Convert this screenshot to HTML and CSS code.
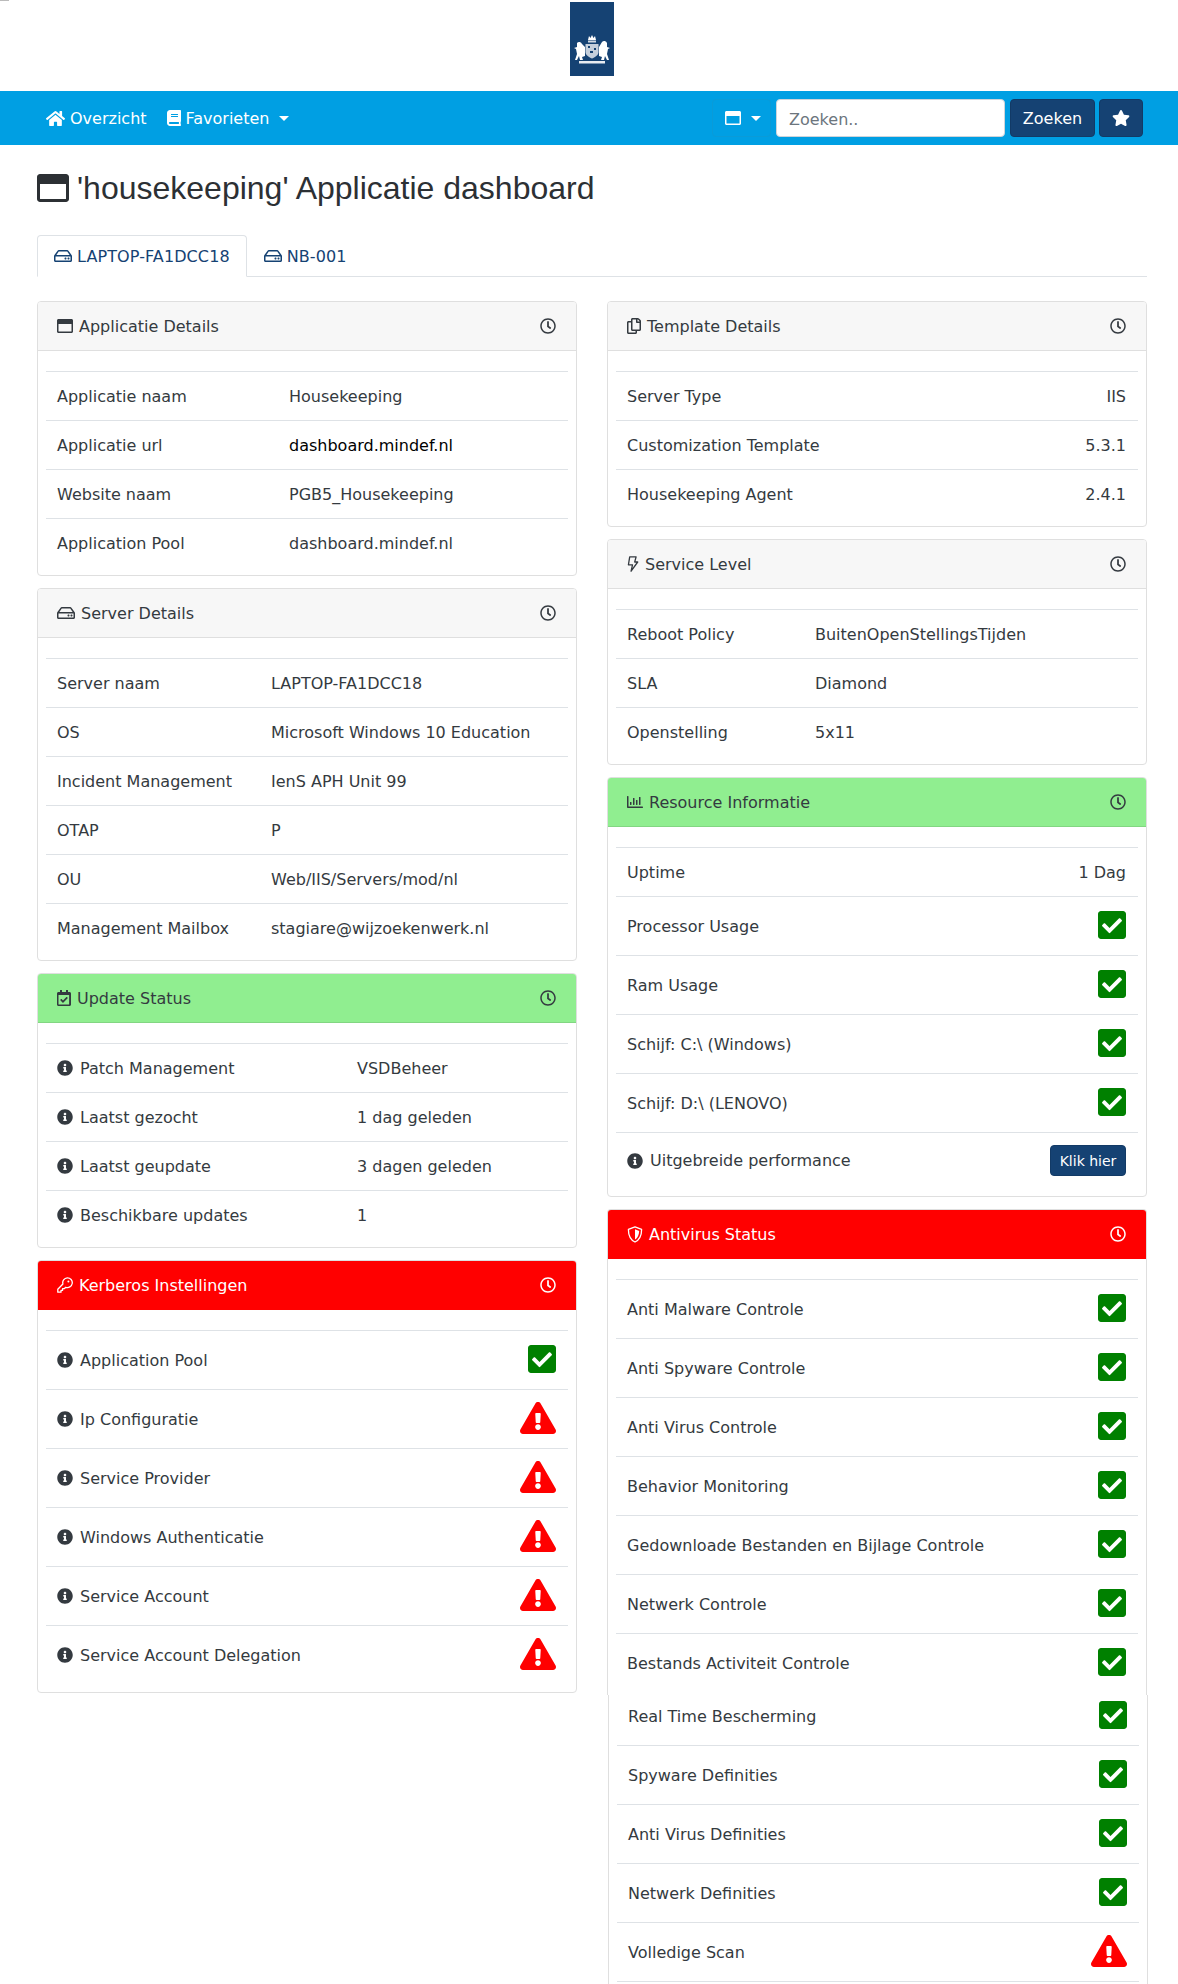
FILE: index.html
```html
<!DOCTYPE html>
<html lang="en">

<head>
  <meta charset="UTF-8">
  <meta name="viewport" content="width=device-width, initial-scale=1.0">
  <title>Housekeeping dashboard</title>
  <link rel="stylesheet" href="styles.css">
</head>

<body>
  <!-- icon set -->
  <svg class="sprite" xmlns="http://www.w3.org/2000/svg">
    <symbol id="i-check" viewBox="0 0 448 512"><path d="M400 480H48c-26.51 0-48-21.49-48-48V80c0-26.51 21.49-48 48-48h352c26.51 0 48 21.49 48 48v352c0 26.51-21.49 48-48 48zm-204.686-98.059l184-184c6.248-6.248 6.248-16.379 0-22.627l-22.627-22.627c-6.248-6.248-16.379-6.249-22.628 0L184 302.745l-70.059-70.059c-6.248-6.248-16.379-6.248-22.628 0l-22.627 22.627c-6.248 6.248-6.248 16.379 0 22.627l104 104c6.249 6.25 16.379 6.25 22.628.001z"/></symbol>
    <symbol id="i-warn" viewBox="0 0 576 512"><path d="M569.517 440.013C587.975 472.007 564.806 512 527.94 512H48.054c-36.937 0-59.999-40.055-41.577-71.987L246.423 23.985c18.467-32.009 64.72-31.951 83.154 0l239.94 416.028zM288 354c-25.405 0-46 20.595-46 46s20.595 46 46 46 46-20.595 46-46-20.595-46-46-46zm-43.673-165.346l7.418 136c.347 6.364 5.609 11.346 11.982 11.346h48.546c6.373 0 11.635-4.982 11.982-11.346l7.418-136c.375-6.874-5.098-12.654-11.982-12.654h-63.383c-6.884 0-12.356 5.78-11.981 12.654z"/></symbol>
    <symbol id="i-info" viewBox="0 0 512 512"><path d="M256 8C119.043 8 8 119.083 8 256c0 136.997 111.043 248 248 248s248-111.003 248-248C504 119.083 392.957 8 256 8zm0 110c23.196 0 42 18.804 42 42s-18.804 42-42 42-42-18.804-42-42 18.804-42 42-42zm56 254c0 6.627-5.373 12-12 12h-88c-6.627 0-12-5.373-12-12v-24c0-6.627 5.373-12 12-12h12v-64h-12c-6.627 0-12-5.373-12-12v-24c0-6.627 5.373-12 12-12h64c6.627 0 12 5.373 12 12v100h12c6.627 0 12 5.373 12 12v24z"/></symbol>
    <symbol id="i-star" viewBox="0 0 576 512"><path d="M259.3 17.8L194 150.2 47.9 171.5c-26.2 3.8-36.7 36.1-17.7 54.6l105.7 103-25 145.5c-4.5 26.3 23.2 46 46.4 33.7L288 439.6l130.7 68.7c23.2 12.2 50.9-7.4 46.4-33.7l-25-145.5 105.7-103c19-18.5 8.5-50.8-17.7-54.6L382 150.2 316.7 17.8c-11.7-23.6-45.6-23.9-57.4 0z"/></symbol>
    <symbol id="i-home" viewBox="0 0 576 512"><path d="M280.37 148.26L96 300.11V464a16 16 0 0 0 16 16l112.06-.29a16 16 0 0 0 15.92-16V368a16 16 0 0 1 16-16h64a16 16 0 0 1 16 16v95.64a16 16 0 0 0 16 16.05L464 480a16 16 0 0 0 16-16V300L295.67 148.26a12.19 12.19 0 0 0-15.3 0zM571.6 251.47L488 182.56V44.05a12 12 0 0 0-12-12h-56a12 12 0 0 0-12 12v72.61L318.47 43a48 48 0 0 0-61 0L4.34 251.47a12 12 0 0 0-1.6 16.9l25.5 31A12 12 0 0 0 45.15 301l235.22-193.74a12.19 12.19 0 0 1 15.3 0L530.9 301a12 12 0 0 0 16.9-1.6l25.5-31a12 12 0 0 0-1.7-16.93z"/></symbol>
    <symbol id="i-book" viewBox="0 0 448 512"><path d="M448 360V24c0-13.3-10.7-24-24-24H96C43 0 0 43 0 96v320c0 53 43 96 96 96h328c13.3 0 24-10.7 24-24v-16c0-7.5-3.5-14.3-8.9-18.7-4.2-15.4-4.2-59.3 0-74.7 5.4-4.3 8.9-11.1 8.9-18.6zM128 134c0-3.3 2.7-6 6-6h212c3.3 0 6 2.7 6 6v20c0 3.3-2.7 6-6 6H134c-3.3 0-6-2.7-6-6v-20zm0 64c0-3.3 2.7-6 6-6h212c3.3 0 6 2.7 6 6v20c0 3.3-2.7 6-6 6H134c-3.3 0-6-2.7-6-6v-20zm253.4 250H96c-17.7 0-32-14.3-32-32 0-17.6 14.4-32 32-32h285.4c-1.9 17.1-1.9 46.9 0 64z"/></symbol>
    <symbol id="i-window" viewBox="0 0 512 512"><path d="M464 32H48C21.5 32 0 53.5 0 80v352c0 26.5 21.5 48 48 48h416c26.5 0 48-21.5 48-48V80c0-26.5-21.5-48-48-48zm0 394c0 3.3-2.7 6-6 6H54c-3.3 0-6-2.7-6-6V192h416v234z"/></symbol>
    <symbol id="i-clock" viewBox="0 0 512 512"><path d="M256 8C119 8 8 119 8 256s111 248 248 248 248-111 248-248S393 8 256 8zm0 448c-110.5 0-200-89.5-200-200S145.5 56 256 56s200 89.5 200 200-89.5 200-200 200zm61.8-104.4l-84.9-61.7c-3.1-2.3-4.9-5.9-4.9-9.7V116c0-6.6 5.4-12 12-12h32c6.6 0 12 5.4 12 12v141.7l66.8 48.6c5.4 3.9 6.5 11.4 2.6 16.8L334.6 349c-3.9 5.3-11.4 6.5-16.8 2.6z"/></symbol>
    <symbol id="i-hdd" viewBox="0 0 576 512"><path d="M567.403 235.642L462.323 84.589A48 48 0 0 0 422.919 64H153.081a48 48 0 0 0-39.404 20.589L8.597 235.642A48.001 48.001 0 0 0 0 263.054V400c0 26.51 21.49 48 48 48h480c26.51 0 48-21.49 48-48V263.054c0-9.801-3-19.366-8.597-27.412zM153.081 112h269.838l77.913 112H75.168l77.913-112zM528 400H48V272h480v128zm-32-64c0 17.673-14.327 32-32 32s-32-14.327-32-32 14.327-32 32-32 32 14.327 32 32zm-96 0c0 17.673-14.327 32-32 32s-32-14.327-32-32 14.327-32 32-32 32 14.327 32 32z"/></symbol>
    <symbol id="i-copy" viewBox="0 0 448 512"><path d="M433.941 65.941l-51.882-51.882A48 48 0 0 0 348.118 0H176c-26.51 0-48 21.49-48 48v48H48c-26.51 0-48 21.49-48 48v320c0 26.51 21.49 48 48 48h224c26.51 0 48-21.49 48-48v-48h80c26.51 0 48-21.49 48-48V99.882a48 48 0 0 0-14.059-33.941zM266 464H54a6 6 0 0 1-6-6V150a6 6 0 0 1 6-6h74v224c0 26.51 21.49 48 48 48h96v42a6 6 0 0 1-6 6zm128-96H182a6 6 0 0 1-6-6V54a6 6 0 0 1 6-6h106v88c0 13.255 10.745 24 24 24h88v202a6 6 0 0 1-6 6zm6-256h-64V48h9.632c1.591 0 3.117.632 4.243 1.757l48.368 48.368a6 6 0 0 1 1.757 4.243V112z"/></symbol>
    <symbol id="i-calendar" viewBox="0 0 448 512"><path d="M400 64h-48V12c0-6.627-5.373-12-12-12h-40c-6.627 0-12 5.373-12 12v52H160V12c0-6.627-5.373-12-12-12h-40c-6.627 0-12 5.373-12 12v52H48C21.49 64 0 85.49 0 112v352c0 26.51 21.49 48 48 48h352c26.51 0 48-21.49 48-48V112c0-26.51-21.49-48-48-48zm-6 400H54a6 6 0 0 1-6-6V160h340v298a6 6 0 0 1-6 6zm-52.849-200.65L198.842 404.519c-4.705 4.667-12.303 4.637-16.971-.068l-75.091-75.699c-4.667-4.705-4.637-12.303.068-16.971l22.719-22.536c4.705-4.667 12.303-4.637 16.97.069l44.104 44.461 111.072-110.181c4.705-4.667 12.303-4.637 16.971.068l22.536 22.718c4.667 4.705 4.636 12.303-.069 16.97z"/></symbol>
    <symbol id="i-chart" viewBox="0 0 512 512"><path d="M396.8 352h22.4c6.4 0 12.8-6.4 12.8-12.8V108.8c0-6.4-6.4-12.8-12.8-12.8h-22.4c-6.4 0-12.8 6.4-12.8 12.8v230.4c0 6.4 6.4 12.8 12.8 12.8zm-192 0h22.4c6.4 0 12.8-6.4 12.8-12.8V140.8c0-6.4-6.4-12.8-12.8-12.8h-22.4c-6.4 0-12.8 6.4-12.8 12.8v198.4c0 6.4 6.4 12.8 12.8 12.8zm96 0h22.4c6.4 0 12.8-6.4 12.8-12.8V204.8c0-6.4-6.4-12.8-12.8-12.8h-22.4c-6.4 0-12.8 6.4-12.8 12.8v134.4c0 6.4 6.4 12.8 12.8 12.8zM496 400H48V80c0-8.84-7.16-16-16-16H16C7.16 64 0 71.16 0 80v336c0 17.67 14.33 32 32 32h464c8.84 0 16-7.16 16-16v-16c0-8.84-7.16-16-16-16zm-387.2-48h22.4c6.4 0 12.8-6.4 12.8-12.8v-70.4c0-6.4-6.4-12.8-12.8-12.8h-22.4c-6.4 0-12.8 6.4-12.8 12.8v70.4c0 6.4 6.4 12.8 12.8 12.8z"/></symbol>
    <symbol id="i-bolt" viewBox="0 0 11 16"><path d="M2.2 .8h6.4L7.2 6h3L3.6 15.2 5 8.8H.9z" fill="none" stroke="currentColor" stroke-width="1.3" stroke-linejoin="round"/></symbol>
    <symbol id="i-key" viewBox="0 0 16 16"><path d="M10.3 .8a4.9 4.9 0 1 1-1.6 9.5L7.3 11.7H5.6v1.6H4v1.9H.8v-3l5.1-5.2A4.9 4.9 0 0 1 10.3 .8z" fill="none" stroke="currentColor" stroke-width="1.3" stroke-linejoin="round"/><circle cx="11.4" cy="4.6" r="1"/></symbol>
    <symbol id="i-shield" viewBox="0 0 16 17"><path d="M8 .8l6.6 2.6C14.6 9.6 12 14 8 16 4 14 1.400 9.600 1.400 3.400z" fill="none" stroke="currentColor" stroke-width="1.300" stroke-linejoin="round"/><path d="M8 3.200l4.200 1.700C12 9 10.500 12 8 13.500z"/></symbol>
  </svg>

  <div class="page">
    <header class="top">
      <div class="top-mark"></div>
      <div class="logo">
        <svg width="44" height="74" viewBox="0 0 44 74">
          <rect width="44" height="74" fill="#154273" />
          <g fill="#fff">
            <path d="M18 38l1-4 1.500 2 1.500-3 1.500 3 1.500-2 1 4z" />
            <rect x="18" y="38.500" width="8" height="2" opacity=".8" />
            <path d="M15.500 42h13v8c0 3-3 5-6.500 6.500-3.500-1.500-6.500-3.500-6.500-6.500z" opacity=".75" />
            <path d="M7 41a3 3 0 0 1 5 1l3 3v9l-3 1 1 3h-3l-1-4-2 4H5l2-6-1-5-2-1 3-1z" />
            <path d="M37 41a3 3 0 0 0-5-1l-3 5v9l3 1-1 3h3l1-4 2 4h2l-2-6 1-5 2-1-3-1z" />
            <path d="M9 59h26v2.500H9z" opacity=".9" />
          </g>
          <g fill="#154273">
            <rect x="18" y="44" width="2" height="2" />
            <rect x="24" y="46" width="2" height="2" />
            <rect x="20" y="49" width="3" height="2" />
          </g>
        </svg>
      </div>
    </header>

    <nav class="navbar">
      <a class="nav-item"><svg class="ic ic-home"><use href="#i-home" /></svg>Overzicht</a>
      <a class="nav-item nav-fav"><svg class="ic ic-book"><use href="#i-book" /></svg>Favorieten<span class="caret caret-fav"></span></a>
      <div class="nav-right">
        <button class="btn-view"><svg class="ic ic-view"><use href="#i-window" /></svg><span class="caret"></span></button>
        <input class="search" type="text" placeholder="Zoeken..">
        <button class="btn-navy btn-search">Zoeken</button>
        <button class="btn-navy btn-star"><svg class="ic ic-star"><use href="#i-star" /></svg></button>
      </div>
    </nav>

    <main class="main">
      <h1 class="title"><svg class="ic ic-title"><use href="#i-window" /></svg>'housekeeping' Applicatie dashboard</h1>

      <ul class="tabs">
        <li class="tab active"><svg class="ic ic-hdd"><use href="#i-hdd" /></svg>LAPTOP-FA1DCC18</li>
        <li class="tab"><svg class="ic ic-hdd"><use href="#i-hdd" /></svg>NB-001</li>
      </ul>

      <div class="columns">
        <div class="column">

          <section class="card app">
            <div class="card-head"><span class="head-title"><svg class="ic ic-16"><use href="#i-window" /></svg>Applicatie Details</span><svg class="ic ic-16"><use href="#i-clock" /></svg></div>
            <div class="card-body">
              <div class="row"><span class="label">Applicatie naam</span><span>Housekeeping</span></div>
              <div class="row"><span class="label">Applicatie url</span><a class="link">dashboard.mindef.nl</a></div>
              <div class="row"><span class="label">Website naam</span><span>PGB5_Housekeeping</span></div>
              <div class="row"><span class="label">Application Pool</span><span>dashboard.mindef.nl</span></div>
            </div>
          </section>

          <section class="card server">
            <div class="card-head"><span class="head-title"><svg class="ic ic-18"><use href="#i-hdd" /></svg>Server Details</span><svg class="ic ic-16"><use href="#i-clock" /></svg></div>
            <div class="card-body">
              <div class="row"><span class="label">Server naam</span><span>LAPTOP-FA1DCC18</span></div>
              <div class="row"><span class="label">OS</span><span>Microsoft Windows 10 Education</span></div>
              <div class="row"><span class="label">Incident Management</span><span>IenS APH Unit 99</span></div>
              <div class="row"><span class="label">OTAP</span><span>P</span></div>
              <div class="row"><span class="label">OU</span><span>Web/IIS/Servers/mod/nl</span></div>
              <div class="row"><span class="label">Management Mailbox</span><span>stagiare@wijzoekenwerk.nl</span></div>
            </div>
          </section>

          <section class="card update ok">
            <div class="card-head"><span class="head-title"><svg class="ic ic-cal"><use href="#i-calendar" /></svg>Update Status</span><svg class="ic ic-16"><use href="#i-clock" /></svg></div>
            <div class="card-body">
              <div class="row"><span class="label"><svg class="ic ic-16"><use href="#i-info" /></svg>Patch Management</span><span>VSDBeheer</span></div>
              <div class="row"><span class="label"><svg class="ic ic-16"><use href="#i-info" /></svg>Laatst gezocht</span><span>1 dag geleden</span></div>
              <div class="row"><span class="label"><svg class="ic ic-16"><use href="#i-info" /></svg>Laatst geupdate</span><span>3 dagen geleden</span></div>
              <div class="row"><span class="label"><svg class="ic ic-16"><use href="#i-info" /></svg>Beschikbare updates</span><span>1</span></div>
            </div>
          </section>

          <section class="card bad">
            <div class="card-head"><span class="head-title"><svg class="ic ic-16"><use href="#i-key" /></svg>Kerberos Instellingen</span><svg class="ic ic-16"><use href="#i-clock" /></svg></div>
            <div class="card-body">
              <div class="row row-tall"><span class="label"><svg class="ic ic-16"><use href="#i-info" /></svg>Application Pool</span><svg class="ic state-ok"><use href="#i-check" /></svg></div>
              <div class="row row-tall"><span class="label"><svg class="ic ic-16"><use href="#i-info" /></svg>Ip Configuratie</span><svg class="ic state-bad"><use href="#i-warn" /></svg></div>
              <div class="row row-tall"><span class="label"><svg class="ic ic-16"><use href="#i-info" /></svg>Service Provider</span><svg class="ic state-bad"><use href="#i-warn" /></svg></div>
              <div class="row row-tall"><span class="label"><svg class="ic ic-16"><use href="#i-info" /></svg>Windows Authenticatie</span><svg class="ic state-bad"><use href="#i-warn" /></svg></div>
              <div class="row row-tall"><span class="label"><svg class="ic ic-16"><use href="#i-info" /></svg>Service Account</span><svg class="ic state-bad"><use href="#i-warn" /></svg></div>
              <div class="row row-tall"><span class="label"><svg class="ic ic-16"><use href="#i-info" /></svg>Service Account Delegation</span><svg class="ic state-bad"><use href="#i-warn" /></svg></div>
            </div>
          </section>

        </div>
        <div class="column">

          <section class="card">
            <div class="card-head"><span class="head-title"><svg class="ic ic-copy"><use href="#i-copy" /></svg>Template Details</span><svg class="ic ic-16"><use href="#i-clock" /></svg></div>
            <div class="card-body">
              <div class="row row-split"><span>Server Type</span><span>IIS</span></div>
              <div class="row row-split"><span>Customization Template</span><span>5.3.1</span></div>
              <div class="row row-split"><span>Housekeeping Agent</span><span>2.4.1</span></div>
            </div>
          </section>

          <section class="card service">
            <div class="card-head"><span class="head-title"><svg class="ic ic-bolt"><use href="#i-bolt" /></svg>Service Level</span><svg class="ic ic-16"><use href="#i-clock" /></svg></div>
            <div class="card-body">
              <div class="row"><span class="label">Reboot Policy</span><span>BuitenOpenStellingsTijden</span></div>
              <div class="row"><span class="label">SLA</span><span>Diamond</span></div>
              <div class="row"><span class="label">Openstelling</span><span>5x11</span></div>
            </div>
          </section>

          <section class="card ok">
            <div class="card-head"><span class="head-title"><svg class="ic ic-16"><use href="#i-chart" /></svg>Resource Informatie</span><svg class="ic ic-16"><use href="#i-clock" /></svg></div>
            <div class="card-body">
              <div class="row row-split"><span>Uptime</span><span>1 Dag</span></div>
              <div class="row row-tall"><span>Processor Usage</span><svg class="ic state-ok"><use href="#i-check" /></svg></div>
              <div class="row row-tall"><span>Ram Usage</span><svg class="ic state-ok"><use href="#i-check" /></svg></div>
              <div class="row row-tall"><span>Schijf: C:\ (Windows)</span><svg class="ic state-ok"><use href="#i-check" /></svg></div>
              <div class="row row-tall"><span>Schijf: D:\ (LENOVO)</span><svg class="ic state-ok"><use href="#i-check" /></svg></div>
              <div class="row row-btn"><span class="label"><svg class="ic ic-16"><use href="#i-info" /></svg>Uitgebreide performance</span><button class="btn-navy btn-small">Klik hier</button></div>
            </div>
          </section>

          <!-- the screenshot was stitched here, the lower part sits 1px to the right -->
          <section class="card bad card-top">
            <div class="card-head"><span class="head-title"><svg class="ic ic-shield"><use href="#i-shield" /></svg>Antivirus Status</span><svg class="ic ic-16"><use href="#i-clock" /></svg></div>
            <div class="card-body">
              <div class="row row-tall"><span>Anti Malware Controle</span><svg class="ic state-ok"><use href="#i-check" /></svg></div>
              <div class="row row-tall"><span>Anti Spyware Controle</span><svg class="ic state-ok"><use href="#i-check" /></svg></div>
              <div class="row row-tall"><span>Anti Virus Controle</span><svg class="ic state-ok"><use href="#i-check" /></svg></div>
              <div class="row row-tall"><span>Behavior Monitoring</span><svg class="ic state-ok"><use href="#i-check" /></svg></div>
              <div class="row row-tall"><span>Gedownloade Bestanden en Bijlage Controle</span><svg class="ic state-ok"><use href="#i-check" /></svg></div>
              <div class="row row-tall"><span>Netwerk Controle</span><svg class="ic state-ok"><use href="#i-check" /></svg></div>
              <div class="row row-tall"><span>Bestands Activiteit Controle</span><svg class="ic state-ok"><use href="#i-check" /></svg></div>
            </div>
          </section>
          <section class="card-rest">
            <div class="row row-cut"><span>Real Time Bescherming</span><svg class="ic state-ok"><use href="#i-check" /></svg></div>
            <div class="row row-tall"><span>Spyware Definities</span><svg class="ic state-ok"><use href="#i-check" /></svg></div>
            <div class="row row-tall"><span>Anti Virus Definities</span><svg class="ic state-ok"><use href="#i-check" /></svg></div>
            <div class="row row-tall"><span>Netwerk Definities</span><svg class="ic state-ok"><use href="#i-check" /></svg></div>
            <div class="row row-tall"><span>Volledige Scan</span><svg class="ic state-bad"><use href="#i-warn" /></svg></div>
            <div class="row row-end"></div>
          </section>

        </div>
      </div>
    </main>
  </div>
</body>

</html>
```

FILE: styles.css
```css
* {
  box-sizing: border-box;
}

body {
  margin: 0;
  font-family: "DejaVu Sans", sans-serif;
  font-size: 16px;
  color: #343a40;
  background: #fff;
}

.sprite {
  display: none;
}

.page {
  height: 1984px;
  overflow: hidden;
}

.ic {
  display: block;
  flex: none;
  fill: currentColor;
}

.ic-16 {
  width: 16px;
  height: 16px;
}

.ic-18 {
  width: 18px;
  height: 16px;
}

/* header + logo */
.top {
  height: 91px;
}

.top-mark {
  width: 9px;
  height: 1px;
  background: #bbb;
}

.logo {
  width: 44px;
  height: 74px;
  margin: 1px 0 0 570px;
}

.logo svg {
  display: block;
}

/* navbar */
.navbar {
  display: flex;
  align-items: center;
  height: 54px;
  padding: 0 35px 0 46px;
  background: #009fe3;
  color: #fff;
}

.nav-item {
  display: flex;
  align-items: center;
  gap: 5px;
}

.nav-fav {
  margin-left: 20px;
}

.ic-home {
  width: 19px;
  height: 17px;
}

.ic-book {
  width: 14px;
  height: 16px;
}

.caret {
  width: 0;
  height: 0;
  border-top: 5px solid #fff;
  border-left: 5px solid transparent;
  border-right: 5px solid transparent;
}

.caret-fav {
  margin-left: 5px;
}

.nav-right {
  display: flex;
  align-items: stretch;
  height: 38px;
  margin-left: auto;
}

.btn-view {
  display: flex;
  align-items: center;
  gap: 10px;
  width: 59px;
  padding: 0 0 0 12px;
  background: transparent;
  border: 1px solid #0a9bd8;
  border-radius: 4px;
}

.ic-view {
  width: 16px;
  height: 16px;
  color: #fff;
}

.search {
  width: 229px;
  margin-left: 5px;
  padding: 2px 12px 0;
  border: 1px solid #ced4da;
  border-radius: 4px;
  font: inherit;
  color: #495057;
}

.search::placeholder {
  color: #6c757d;
}

.btn-navy {
  padding: 0;
  margin-left: 5px;
  background: #154273;
  border: 1px solid #123a66;
  border-radius: 4px;
  color: #fff;
  font: inherit;
}

.btn-search {
  width: 85px;
}

.btn-star {
  width: 44px;
  margin-left: 4px;
  display: flex;
  align-items: center;
  justify-content: center;
}

.ic-star {
  width: 18px;
  height: 16px;
}

.btn-small {
  width: 76px;
  height: 31px;
  font-size: 14px;
}

/* main */
.main {
  width: 1110px;
  margin-left: 37px;
}

.title {
  display: flex;
  align-items: center;
  gap: 8px;
  height: 38px;
  margin: 24px 0 28px;
  font-family: "Liberation Sans", sans-serif;
  font-size: 32px;
  font-weight: 400;
  color: #2c3034;
}

.ic-title {
  width: 32px;
  height: 32px;
}

.tabs {
  display: flex;
  height: 42px;
  margin: 0 0 24px;
  padding: 0;
  list-style: none;
  border-bottom: 1px solid #dee2e6;
  color: #154273;
}

.tab {
  display: flex;
  align-items: center;
  gap: 5px;
  height: 42px;
  padding: 0 16px;
  border: 1px solid transparent;
  border-radius: 4px 4px 0 0;
  letter-spacing: .1px;
}

.tab.active {
  background: #fff;
  border-color: #dee2e6 #dee2e6 #fff;
}

.ic-hdd {
  width: 18px;
  height: 16px;
}

.columns {
  display: grid;
  grid-template-columns: 540px 540px;
  gap: 30px;
}

.column {
  display: flex;
  flex-direction: column;
  gap: 12px;
}

/* cards */
.card {
  border: 1px solid #dfdfdf;
  border-radius: 4px;
}

.card-head {
  display: flex;
  align-items: center;
  justify-content: space-between;
  height: 49px;
  padding: 0 20px 0 19px;
  background: #f7f7f7;
  border-bottom: 1px solid #dfdfdf;
  border-radius: 3px 3px 0 0;
}

.head-title {
  display: flex;
  align-items: center;
  gap: 6px;
}

.ok .card-head {
  background: #90ee90;
  border-bottom-color: #82d682;
}

.bad .card-head {
  background: #f00;
  border-bottom-color: #f00;
  color: #fff;
}

.card-body {
  padding: 20px 8px 8px;
}

.row {
  display: flex;
  align-items: center;
  height: 49px;
  padding: 0 12px 0 11px;
  border-top: 1px solid #dee2e6;
}

.row-split,
.row-tall,
.row-btn {
  justify-content: space-between;
}

.row-tall {
  height: 59px;
}

.row-btn {
  height: 56px;
}

.label {
  display: flex;
  align-items: center;
  gap: 7px;
  flex: none;
}

.app .label {
  width: 232px;
}

.server .label {
  width: 214px;
}

.update .label {
  width: 300px;
}

.service .label {
  width: 188px;
}

.link {
  color: #000;
}

.state-ok {
  width: 28px;
  height: 32px;
  margin-bottom: 2px;
  color: #008000;
}

.state-bad {
  width: 36px;
  height: 32px;
  margin-bottom: 2px;
  color: #f00;
}

.ic-cal {
  width: 14px;
  height: 16px;
}

.ic-copy {
  width: 14px;
  height: 16px;
}

.ic-bolt {
  width: 12px;
  height: 16px;
}

.ic-shield {
  width: 16px;
  height: 17px;
}

/* stitched antivirus card */
.card-top {
  border-bottom: 0;
  border-radius: 4px 4px 0 0;
}

.card-top .card-body {
  padding-bottom: 3px;
}

.card-rest {
  margin: -12px -1px 0 1px;
  padding: 0 8px;
  border-left: 1px solid #dfdfdf;
  border-right: 1px solid #dfdfdf;
}

.row-cut {
  justify-content: space-between;
  height: 50px;
  padding-bottom: 8px;
  border-top: 0;
}

.row-end {
  height: 8px;
}
```
